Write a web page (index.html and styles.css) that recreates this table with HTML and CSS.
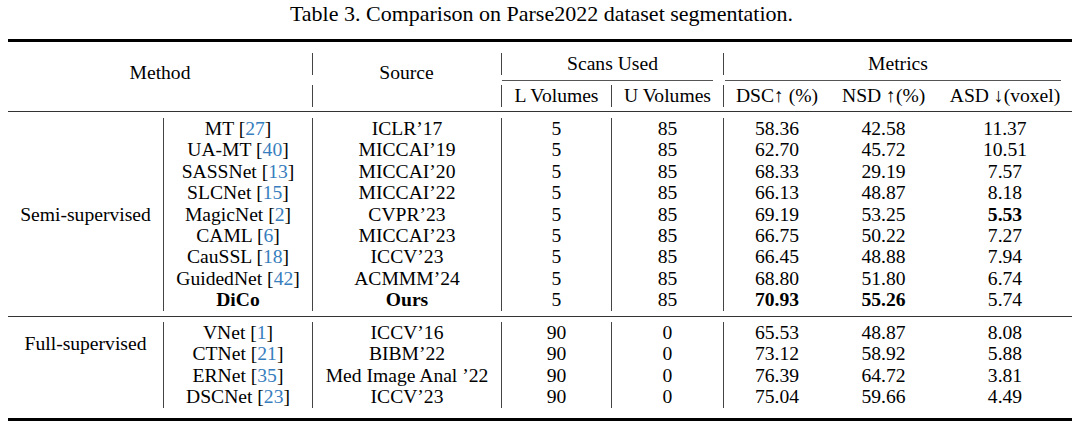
FILE: index.html
```html
<!DOCTYPE html>
<html lang="en">
<head>
<meta charset="utf-8">
<title>Table 3</title>
<link rel="stylesheet" href="styles.css">
</head>
<body>
<p class="caption">Table 3. Comparison on Parse2022 dataset segmentation.</p>
<div class="table">
  <div class="rule-heavy"></div>
  <div class="head">
    <div class="h-method">Method</div>
    <div class="h-source">Source</div>
    <div class="h-scans">Scans Used</div>
    <div class="h-metrics">Metrics</div>
    <div class="cmid cmid-scans"></div>
    <div class="cmid cmid-metrics"></div>
    <div class="h-l">L Volumes</div>
    <div class="h-u">U Volumes</div>
    <div class="h-dsc">DSC↑ (%)</div>
    <div class="h-nsd">NSD ↑(%)</div>
    <div class="h-asd">ASD ↓(voxel)</div>
  </div>
  <div class="rule-thin"></div>
  <div class="group group-semi">
    <div class="label label-semi">Semi-supervised</div>

    <div class="m">MT [<span class="cite">27</span>]</div><div class="s">ICLR’17</div><div class="l">5</div><div class="u">85</div><div class="dsc">58.36</div><div class="nsd">42.58</div><div class="asd">11.37</div>
    <div class="m">UA-MT [<span class="cite">40</span>]</div><div class="s">MICCAI’19</div><div class="l">5</div><div class="u">85</div><div class="dsc">62.70</div><div class="nsd">45.72</div><div class="asd">10.51</div>
    <div class="m">SASSNet [<span class="cite">13</span>]</div><div class="s">MICCAI’20</div><div class="l">5</div><div class="u">85</div><div class="dsc">68.33</div><div class="nsd">29.19</div><div class="asd">7.57</div>
    <div class="m">SLCNet [<span class="cite">15</span>]</div><div class="s">MICCAI’22</div><div class="l">5</div><div class="u">85</div><div class="dsc">66.13</div><div class="nsd">48.87</div><div class="asd">8.18</div>
    <div class="m">MagicNet [<span class="cite">2</span>]</div><div class="s">CVPR’23</div><div class="l">5</div><div class="u">85</div><div class="dsc">69.19</div><div class="nsd">53.25</div><div class="asd"><b>5.53</b></div>
    <div class="m">CAML [<span class="cite">6</span>]</div><div class="s">MICCAI’23</div><div class="l">5</div><div class="u">85</div><div class="dsc">66.75</div><div class="nsd">50.22</div><div class="asd">7.27</div>
    <div class="m">CauSSL [<span class="cite">18</span>]</div><div class="s">ICCV’23</div><div class="l">5</div><div class="u">85</div><div class="dsc">66.45</div><div class="nsd">48.88</div><div class="asd">7.94</div>
    <div class="m">GuidedNet [<span class="cite">42</span>]</div><div class="s">ACMMM’24</div><div class="l">5</div><div class="u">85</div><div class="dsc">68.80</div><div class="nsd">51.80</div><div class="asd">6.74</div>
    <div class="m"><b>DiCo</b></div><div class="s"><b>Ours</b></div><div class="l">5</div><div class="u">85</div><div class="dsc"><b>70.93</b></div><div class="nsd"><b>55.26</b></div><div class="asd">5.74</div>
  </div>
  <div class="rule-thin"></div>
  <div class="group group-full">
    <div class="label label-full">Full-supervised</div>

    <div class="m">VNet [<span class="cite">1</span>]</div><div class="s">ICCV’16</div><div class="l">90</div><div class="u">0</div><div class="dsc">65.53</div><div class="nsd">48.87</div><div class="asd">8.08</div>
    <div class="m">CTNet [<span class="cite">21</span>]</div><div class="s">BIBM’22</div><div class="l">90</div><div class="u">0</div><div class="dsc">73.12</div><div class="nsd">58.92</div><div class="asd">5.88</div>
    <div class="m">ERNet [<span class="cite">35</span>]</div><div class="s">Med Image Anal ’22</div><div class="l">90</div><div class="u">0</div><div class="dsc">76.39</div><div class="nsd">64.72</div><div class="asd">3.81</div>
    <div class="m">DSCNet [<span class="cite">23</span>]</div><div class="s">ICCV’23</div><div class="l">90</div><div class="u">0</div><div class="dsc">75.04</div><div class="nsd">59.66</div><div class="asd">4.49</div>
  </div>
  <div class="rule-heavy"></div>
</div>
</body>
</html>
```

FILE: styles.css
```css
* { box-sizing: border-box; }

body {
  margin: 0;
  background: #fff;
  color: #000;
  font-family: "Liberation Serif", "Times New Roman", serif;
}

.caption {
  margin: 0;
  height: 39px;
  padding-top: 1px;
  line-height: 26px;
  font-size: 22px;
  text-align: center;
}

.table {
  width: 1064px;
  margin-left: 8px;
  font-size: 19.6px;
}

.rule-heavy {
  height: 3px;
  background: #000;
}

.rule-thin {
  height: 1px;
  background: #333;
}

.head,
.group {
  display: grid;
  grid-template-columns: 155px 149px 189px 110px 112px 107px 92px 150px;
  text-align: center;
  white-space: nowrap;
}

.head {
  grid-template-rows: 22px 10px 22px;
  line-height: 22px;
  margin: 11px 0 4px;
}

.h-method,
.h-source {
  grid-row: 1 / 4;
  display: flex;
  align-items: center;
  justify-content: center;
  padding-bottom: 14px;
}

.h-method { grid-column: 1 / 3; }

.h-source {
  grid-column: 3;
  background-image: linear-gradient(#444, #444), linear-gradient(#444, #444);
  background-size: 1px 22px;
  background-position: left top, left bottom;
  background-repeat: no-repeat;
}

.h-scans { grid-column: 4 / 6; grid-row: 1; border-left: 1px solid #444; }
.h-metrics { grid-column: 6 / 9; grid-row: 1; border-left: 1px solid #444; }

.cmid {
  grid-row: 2;
  align-self: center;
  height: 1px;
  background: #555;
}
.cmid-scans { grid-column: 4 / 6; margin: 0 10px 0 1px; }
.cmid-metrics { grid-column: 6 / 9; margin: 0 11px 0 2px; }

.h-l { grid-column: 4; grid-row: 3; border-left: 1px solid #444; }
.h-u { grid-column: 5; grid-row: 3; border-left: 1px solid #444; }
.h-dsc { grid-column: 6; grid-row: 3; border-left: 1px solid #444; }
.h-nsd { grid-column: 7; grid-row: 3; padding-left: 12px; }
.h-asd { grid-column: 8; grid-row: 3; padding-left: 16px; }

.group {
  line-height: 21.4px;
}

.group-semi { margin: 6px 0 5.4px; }
.group-full { margin: 5px 0 10.4px; }

.label {
  grid-column: 1;
  align-self: center;
}
.label-semi { grid-row: 1 / 10; }
.label-full { grid-row: 1 / 3; }

.m { grid-column: 2; }
.s { grid-column: 3; }
.l { grid-column: 4; }
.u { grid-column: 5; }
.dsc { grid-column: 6; }
.nsd { grid-column: 7; padding-left: 15px; }
.asd { grid-column: 8; padding-left: 16px; }

.m, .s, .l, .u, .dsc {
  border-left: 1px solid #444;
}

.cite { color: #367dbd; }

b { font-weight: bold; }
```
